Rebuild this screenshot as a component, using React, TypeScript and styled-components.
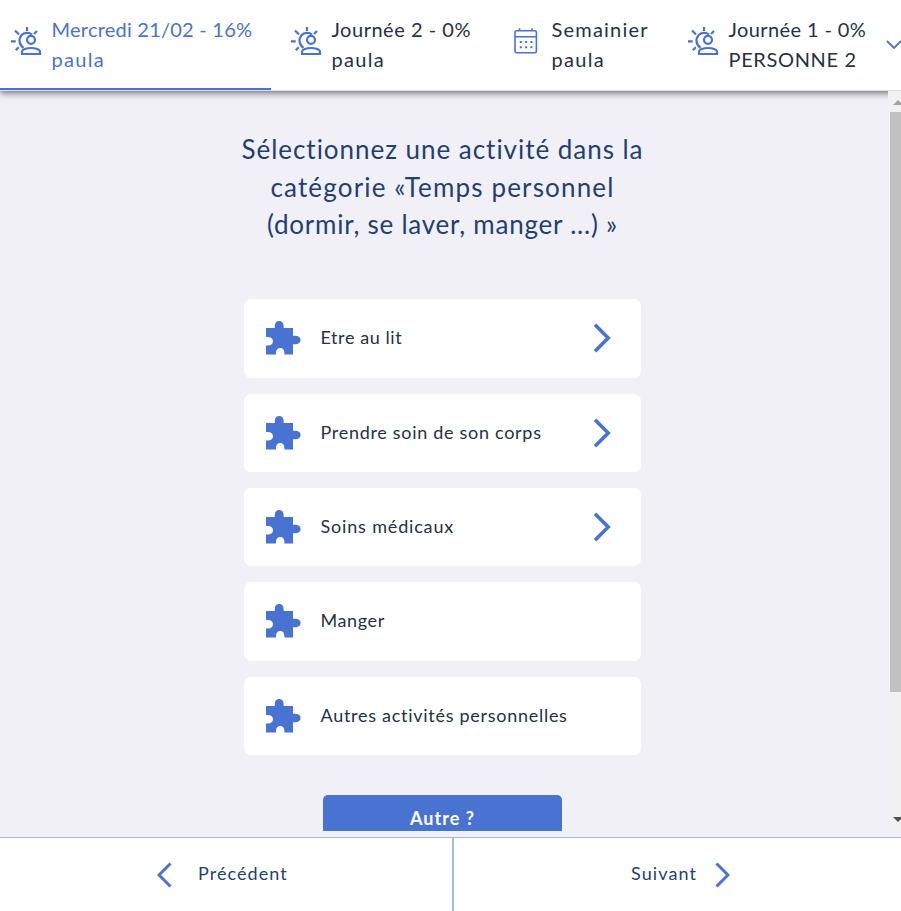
import React from "react";
import styled, { createGlobalStyle } from "styled-components";

const blue = "#4973d2";
const navy = "#1f3f77";
const ink = "#273044";

const GlobalStyle = createGlobalStyle`
  * { box-sizing: border-box; }
  body { margin: 0; overflow: hidden; font-family: Lato, "Open Sans", sans-serif; }
  svg { display: block; flex: none; }
`;

const Page = styled.div`
  display: flex;
  flex-direction: column;
  width: 901px;
  height: 911px;
  overflow: hidden;
  background: #f1f0f7;
`;

const TabBar = styled.header`
  display: flex;
  gap: 9px;
  flex: none;
  height: 91px;
  background: #fff;
  border-bottom: 1px solid #dcdcdf;
  box-shadow: 0 2px 7px rgba(0, 0, 0, 0.55);
  position: relative;
  z-index: 1;
`;

const Tab = styled.div<{ $width: number; $active?: boolean }>`
  display: flex;
  flex: none;
  width: ${(p) => p.$width}px;
  height: 90px;
  padding: 14px 0 0 11px;
  color: ${(p) => (p.$active ? blue : ink)};
  border-bottom: 2px solid ${(p) => (p.$active ? blue : "transparent")};
`;

const TabIcon = styled.div`
  width: 40.5px;
  padding-top: 13px;
  color: ${blue};
`;

const TabLine = styled.div<{ $spacing: number }>`
  font-size: 20px;
  line-height: 30px;
  white-space: nowrap;
  letter-spacing: ${(p) => p.$spacing}px;
`;

const MoreTabs = styled.div`
  padding-top: 39px;
  margin-left: -2px;
  color: ${blue};
`;

const Body = styled.div`
  display: flex;
  flex: none;
  height: 740px;
`;

const Main = styled.main`
  display: flex;
  flex-direction: column;
  align-items: center;
  width: 888px;
  padding: 40px 3px 0 0;
  overflow: hidden;
`;

const Title = styled.h1`
  margin: 0 0 55px;
  font-size: 26px;
  font-weight: 400;
  line-height: 37.7px;
  text-align: center;
  color: ${navy};
`;

const TitleLine = styled.div<{ $spacing: number }>`
  white-space: nowrap;
  letter-spacing: ${(p) => p.$spacing}px;
`;

const CardList = styled.div`
  display: flex;
  flex: none;
  flex-direction: column;
  gap: 16px;
  width: 397px;
`;

const Card = styled.div`
  display: flex;
  align-items: center;
  height: 78.4px;
  padding: 0 30px 0 21.5px;
  border-radius: 7px;
  background: #fff;
  color: ${blue};
`;

const CardLabel = styled.div<{ $spacing: number }>`
  flex: 1;
  margin-left: 20px;
  padding-bottom: 2px;
  font-size: 18px;
  line-height: 26px;
  white-space: nowrap;
  color: ${ink};
  letter-spacing: ${(p) => p.$spacing}px;
`;

const OtherButton = styled.button`
  flex: none;
  width: 239px;
  height: 46px;
  margin-top: 40px;
  padding: 0;
  border: 0;
  border-radius: 5px;
  background: ${blue};
  color: #fff;
  font: 700 18px/46px Lato, sans-serif;
  letter-spacing: 1px;
`;

const Scrollbar = styled.div`
  display: flex;
  flex-direction: column;
  position: relative;
  z-index: 2;
  width: 13px;
  height: 740px;
  background: #f1f1f1;
  align-items: flex-end;
`;

const Thumb = styled.div`
  width: 11px;
  height: 580px;
  margin: 7px 0 125px;
  background: #c1c1c1;
`;

const ArrowUp = styled.div`
  margin-top: 9px;
`;

const Footer = styled.footer`
  display: flex;
  flex: none;
  height: 74px;
  margin-top: 6px;
  border-top: 1px solid #a6b9e7;
  background: #fff;
  color: ${blue};
`;

const FooterCell = styled.div<{ $side: "left" | "right" }>`
  display: flex;
  align-items: center;
  gap: ${(p) => (p.$side === "left" ? 26 : 17.5)}px;
  width: ${(p) => (p.$side === "left" ? 454 : 447)}px;
  padding-left: ${(p) => (p.$side === "left" ? 157 : 177)}px;
  border-right: ${(p) => (p.$side === "left" ? "2px solid #a6b9e7" : "0")};
`;

const FooterLabel = styled.div<{ $spacing: number }>`
  font-size: 18px;
  line-height: 26px;
  padding-bottom: 4px;
  white-space: nowrap;
  color: ${navy};
  letter-spacing: ${(p) => p.$spacing}px;
`;

const SunUser = () => (
  <svg width="31" height="29" viewBox="0 0 31 29" fill="none" stroke="currentColor" strokeWidth="2.2">
    <path d="M16 0v4M4 3.5l4 4M26 4l-3 3M0 14.3h4.7M7.8 20.2l-3 3" />
    <path d="M21 7.6C18 5.2 13.2 5.2 10.5 8.2c-3.2 3.7-2.6 9.5 2 12.6" />
    <circle cx="20" cy="12.8" r="4" />
    <path d="M11 27v-2.2C11 22.4 15.5 21 20 21s9 1.4 9 3.8V27z" />
  </svg>
);

const Calendar = () => (
  <svg width="31" height="29" viewBox="0 0 31 29" fill="none" stroke="currentColor" strokeWidth="1.6">
    <rect x="4" y="3.8" width="21.4" height="22" rx="1.5" />
    <path d="M4 9.8h21M8.5 1.2v2.6M21 1.2v2.6" />
    <path strokeWidth="2" strokeDasharray="2 3.3" d="M8.8 15h13M8.8 20.2h13" />
  </svg>
);

const Puzzle = () => (
  <svg width="35" height="34" viewBox="0 0 35 34" fill="currentColor">
    <path d="M0 7H8.8V4.8C8.8 1.7 10.7 0 13.2 0s4.4 1.7 4.4 4.8V7H27v7.8h2c3.7 0 5.6 1.8 5.6 4.2S32.7 23.3 29 23.3h-2V33.5h-8.6v-1.8c0-3-1.7-4.7-4.2-4.7S10 28.7 10 31.7v1.8H0v-9h1.8c3.4 0 5.2-1.8 5.2-4.2s-1.8-4.2-5.2-4.2H0z" />
  </svg>
);

const CardChevron = () => (
  <svg width="18" height="30" viewBox="0 0 18 30" fill="none" stroke="currentColor" strokeWidth="3.6">
    <path d="M2 1.8 15.2 15 2 28.2" />
  </svg>
);

const NavChevron = ({ left = false }: { left?: boolean }) => (
  <svg width="15" height="26" viewBox="0 0 15 26" fill="none" stroke="currentColor" strokeWidth="3">
    <path d={left ? "M13.5 1.5 2 13l11.5 11.5" : "M1.5 1.5 13 13 1.5 24.5"} />
  </svg>
);

const tabs = [
  { width: 271, lines: [["Mercredi 21/02 - 16%", 0.23], ["paula", 1.3]], active: true, icon: <SunUser /> },
  { width: 211, lines: [["Journée 2 - 0%", 0.52], ["paula", 1.3]], icon: <SunUser /> },
  { width: 168, lines: [["Semainier", 1.2], ["paula", 1.3]], icon: <Calendar /> },
  { width: 202, lines: [["Journée 1 - 0%", 0.4], ["PERSONNE 2", 0.65]], icon: <SunUser /> },
] as { width: number; lines: [string, number][]; active?: boolean; icon: React.ReactNode }[];

const activities = [
  { label: "Etre au lit", spacing: 0.58, nested: true },
  { label: "Prendre soin de son corps", spacing: 0.7, nested: true },
  { label: "Soins médicaux", spacing: 0.83, nested: true },
  { label: "Manger", spacing: 0.6, nested: false },
  { label: "Autres activités personnelles", spacing: 0.72, nested: false },
];

export default function App() {
  return (
    <Page>
      <GlobalStyle />
      <TabBar>
        {tabs.map((tab, i) => (
          <Tab key={i} $width={tab.width} $active={tab.active}>
            <TabIcon>{tab.icon}</TabIcon>
            <div>
              {tab.lines.map(([text, spacing]) => (
                <TabLine key={text} $spacing={spacing}>{text}</TabLine>
              ))}
            </div>
          </Tab>
        ))}
        <MoreTabs>
          <svg width="16" height="11" viewBox="0 0 16 11" fill="none" stroke="currentColor" strokeWidth="1.8">
            <path d="m1 2 7 7 7-7" />
          </svg>
        </MoreTabs>
      </TabBar>
      <Body>
        <Main>
          <Title>
            <TitleLine $spacing={0.97}>Sélectionnez une activité dans la</TitleLine>
            <TitleLine $spacing={1.16}>catégorie «Temps personnel</TitleLine>
            <TitleLine $spacing={0.77}>(dormir, se laver, manger ...) »</TitleLine>
          </Title>
          <CardList>
            {activities.map((a) => (
              <Card key={a.label}>
                <Puzzle />
                <CardLabel $spacing={a.spacing}>{a.label}</CardLabel>
                {a.nested && <CardChevron />}
              </Card>
            ))}
          </CardList>
          <OtherButton>Autre ?</OtherButton>
        </Main>
        <Scrollbar>
          <ArrowUp>
            <svg width="8" height="5" viewBox="0 0 8 5" fill="#a3a3a3"><path d="M0 5 5 0l5 5z" /></svg>
          </ArrowUp>
          <Thumb />
          <svg width="8" height="5" viewBox="0 0 8 5" fill="#505050"><path d="M0 0h10L5 5z" /></svg>
        </Scrollbar>
      </Body>
      <Footer>
        <FooterCell $side="left">
          <NavChevron left />
          <FooterLabel $spacing={1.05}>Précédent</FooterLabel>
        </FooterCell>
        <FooterCell $side="right">
          <FooterLabel $spacing={1.1}>Suivant</FooterLabel>
          <NavChevron />
        </FooterCell>
      </Footer>
    </Page>
  );
}
